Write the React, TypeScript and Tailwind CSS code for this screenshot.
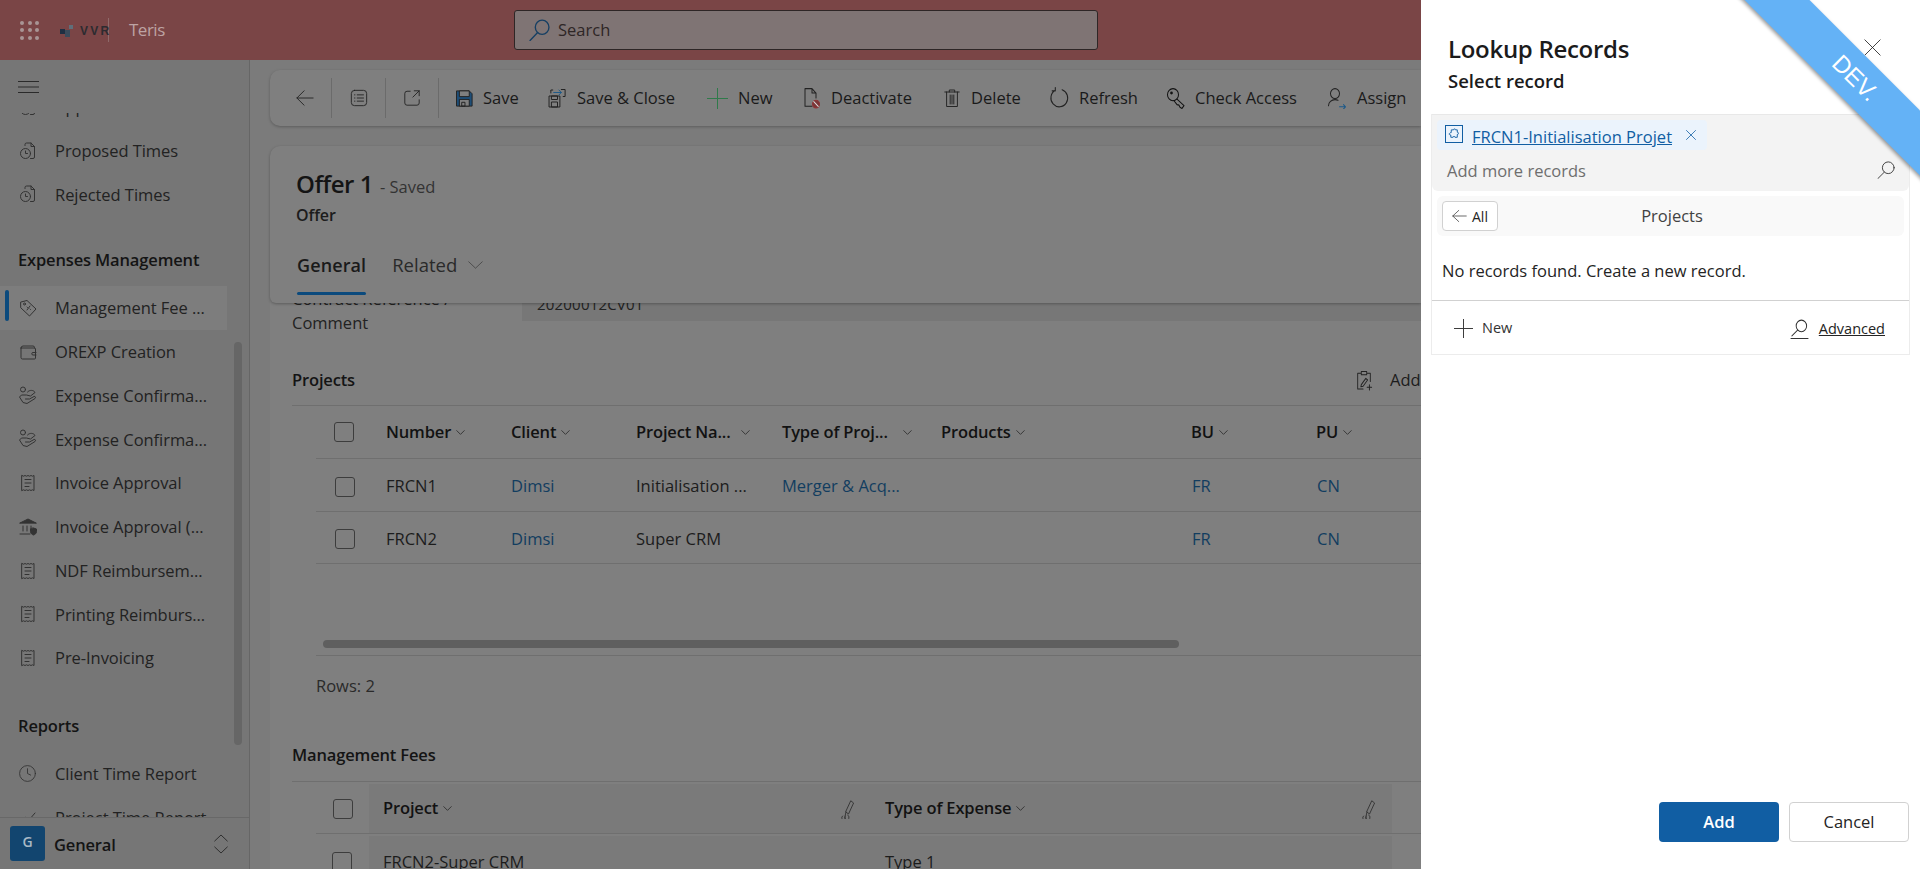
import React from "react";
import { ChevronDown, Clock } from "lucide-react";

const S = ({ children, c = "w-5 h-5", box = "0 0 20 20", stroke = "#2a2a2a", sw = 1 }: any) => (
  <svg viewBox={box} className={c + " shrink-0"} fill="none" stroke={stroke} strokeWidth={sw} strokeLinecap="round" strokeLinejoin="round" preserveAspectRatio="none">
    {children}
  </svg>
);

const Mag = ({ c = "w-[19px] h-[19px]", stroke = "#333", sw = 1 }: any) => (
  <S c={c} stroke={stroke} sw={sw}>
    <circle cx="12.5" cy="7.5" r="6.5" />
    <path d="M8 12.5 L1 19.5" />
  </S>
);
const Cross = ({ c = "w-[17px] h-[17px]", stroke = "#222", sw = 1 }: any) => (
  <S c={c} stroke={stroke} sw={sw}>
    <path d="M1 1 L19 19 M19 1 L1 19" />
  </S>
);
const PlusI = ({ c = "w-[21px] h-[21px]", stroke = "#222" }: any) => (
  <S c={c} stroke={stroke}>
    <path d="M10 0 V20 M0 10 H20" />
  </S>
);
const Arrow = ({ c = "w-[18px] h-[18px]", stroke = "#222" }: any) => (
  <S c={c} stroke={stroke}>
    <path d="M1 10 H19 M9 2 L1 10 L9 18" />
  </S>
);

const DocClock = () => (
  <S stroke="#333">
    <path d="M7 4.5 V3.5 a1.5 1.5 0 0 1 1.5-1.5 H13 l3.5 3.5 V16 a1.5 1.5 0 0 1-1.5 1.5 h-2.5" />
    <path d="M13 2 v3.5 h3.5" />
    <circle cx="7.5" cy="12.5" r="5" />
    <path d="M7.5 10 v2.5 h2" />
  </S>
);
const Tag = () => (
  <S stroke="#333">
    <path d="M3 4 l6-1.5 9 8.5 -6.5 7 -8.5-8z" />
    <circle cx="6.5" cy="6" r="1" />
    <path d="M9 12 l3-4 M9 9 l.5.5 M12 11 l.5.5" />
  </S>
);
const Wallet = () => (
  <S stroke="#333">
    <path d="M3 6 a2 2 0 0 1 2-2 h10 a1.5 1.5 0 0 1 1.5 1.5 V6" />
    <path d="M3 6 v9.5 a1.5 1.5 0 0 0 1.5 1.5 h12 a1 1 0 0 0 1-1 V7 a1 1 0 0 0-1-1 H3" />
    <path d="M18 10.5 h-3 a1 1 0 0 0 0 2.5 h3" />
  </S>
);
const Hand = () => (
  <S stroke="#333">
    <circle cx="5" cy="3.5" r="2.5" />
    <path d="M9.5 6 c2-2.5 6.5-2 7.5 .5 l-4.5 3.5 l-4 -1 h-5 l-2 2 l3.5 5.5 l4 1 l8-5 c1-1 .5-2.5-1-2 l-4.5 2.5 h-4" />
  </S>
);
const Receipt = () => (
  <S stroke="#333">
    <path d="M4 2.5 l1.5.7 1.5-.7 1.5.7 1.5-.7 1.5.7 1.5-.7 1.5.7 1.5-.7 V17.5 l-1.5-.7 -1.5.7 -1.5-.7 -1.5.7 -1.5-.7 -1.5.7 -1.5-.7 -1.5.7 Z" />
    <path d="M7 6.5 h6 M7 10 h6 M7 13.5 h4" />
  </S>
);
const Bank = () => (
  <S stroke="#333">
    <path d="M2 6 L10 2 l8 4 Z" fill="#333" />
    <path d="M5 9 v5 M9 9 v5 M13 9 v2" />
    <path d="M2 17 h10" />
    <path d="M15.5 11 l3 1 v2.5 c0 2 -1.5 3 -3 3.5 c-1.5-.5 -3-1.5 -3-3.5 V12 Z" fill="#333" />
  </S>
);
const TrendIcon = () => (
  <S stroke="#333">
    <path d="M3 14 l4-5 4 3 6-7" />
  </S>
);

const NavItem = ({ icon, label, active }: any) => (
  <div className={"relative flex items-center h-[43.75px] w-[227px] pl-[18px] " + (active ? "bg-[#7d7d7d]" : "")}>
    {active && <span className="absolute left-[5px] top-[4px] w-[4px] h-[31px] bg-[#0b4a7d] rounded-sm" />}
    <span className="w-[37px] flex shrink-0">{icon}</span>
    <span className="text-[16.5px] text-[#222] whitespace-nowrap pt-[1px] tracking-[-0.05px]">{label}</span>
  </div>
);

const Sidebar = () => (
  <aside className="w-[250px] shrink-0 bg-[#767676] border-r border-r-[#666] flex flex-col relative">
    <div className="h-[53px] shrink-0 pl-[18px] pt-[21px]">
      <svg viewBox="0 0 21 12" className="w-[21px] h-[12px]" stroke="#2a2a2a" strokeWidth="1">
        <path d="M0 .5 H21 M0 6 H21 M0 11.5 H21" />
      </svg>
    </div>
    <div className="flex-1 overflow-hidden">
      <div className="-mt-[28px]">
        <NavItem icon={<DocClock />} label="Approved Times" />
        <NavItem icon={<DocClock />} label="Proposed Times" />
        <NavItem icon={<DocClock />} label="Rejected Times" />
        <div className="pl-[18px] pt-[33px] h-[70px] text-[16.5px] font-semibold text-[#141414] tracking-[-0.15px] leading-[22px] whitespace-nowrap">Expenses Management</div>
        <NavItem active icon={<Tag />} label="Management Fee ..." />
        <NavItem icon={<Wallet />} label="OREXP Creation" />
        <NavItem icon={<Hand />} label="Expense Confirma..." />
        <NavItem icon={<Hand />} label="Expense Confirma..." />
        <NavItem icon={<Receipt />} label="Invoice Approval" />
        <NavItem icon={<Bank />} label="Invoice Approval (..." />
        <NavItem icon={<Receipt />} label="NDF Reimbursem..." />
        <NavItem icon={<Receipt />} label="Printing Reimburs..." />
        <NavItem icon={<Receipt />} label="Pre-Invoicing" />
        <div className="pl-[18px] pt-[35px] h-[72px] text-[16.5px] font-semibold text-[#141414] tracking-[-0.15px] leading-[22px]">Reports</div>
        <NavItem icon={<Clock className="w-[19px] h-[19px]" strokeWidth={1.1} color="#333" />} label="Client Time Report" />
        <NavItem icon={<TrendIcon />} label="Project Time Report" />
      </div>
    </div>
    <div className="h-[52px] shrink-0 border-t border-t-[#686868] flex items-center pl-[10px] bg-[#767676]">
      <div className="w-[35px] h-[35px] rounded-[3px] bg-[#12456f] text-[#a9b9c6] flex items-center justify-center text-[14px] font-semibold pb-[4px]">G</div>
      <span className="ml-[9px] text-[16.5px] font-semibold text-[#141414] tracking-[-0.15px] pt-[3px]">General</span>
      <span className="ml-auto mr-[21px] flex">
        <S c="w-[14px] h-[20px]" stroke="#222">
          <path d="M1 7 L10 1 L19 7 M1 13 L10 19 L19 13" />
        </S>
      </span>
    </div>
    <div className="absolute left-[234px] top-[282px] w-[8px] h-[403px] rounded bg-[#666]" />
  </aside>
);

const Cmd = ({ icon, label, w, iw }: any) => (
  <div className="flex items-center shrink-0" style={{ width: w }}>
    <span className="flex justify-start shrink-0" style={{ width: iw }}>{icon}</span>
    <span className="text-[16.5px] text-[#1a1a1a] whitespace-nowrap pt-[1px]">{label}</span>
  </div>
);

const Sep = () => <span className="w-px h-[40px] bg-[#6b6b6b] shrink-0" />;

const CommandBar = () => (
  <div className="h-[56px] ml-[20px] rounded-l-[10px] bg-[#7f7f7f] shadow-[0_1px_3px_rgba(0,0,0,0.25)] flex items-center pl-[26px] whitespace-nowrap overflow-hidden shrink-0">
    <span className="w-[35px] flex shrink-0"><Arrow /></span>
    <Sep />
    <span className="w-[53px] flex justify-center shrink-0">
      <S c="w-[18px] h-[18px]" stroke="#222">
        <rect x="1.5" y="1.5" width="17" height="17" rx="3.5" />
        <path d="M8 6.5 h7 M8 10 h7 M8 13.5 h7 M5 6.5 h.5 M5 10 h.5 M5 13.5 h.5" />
      </S>
    </span>
    <Sep />
    <span className="w-[52px] flex justify-center shrink-0">
      <S c="w-[18px] h-[18px]" stroke="#222">
        <path d="M8 2.5 H4.5 a2.5 2.5 0 0 0-2.5 2.5 v10.5 a2.5 2.5 0 0 0 2.5 2.5 h11 a2.5 2.5 0 0 0 2.5-2.5 V12" />
        <path d="M11 9 L18 2 M12.5 2 h5.5 v5.5" />
      </S>
    </span>
    <Sep />
    <div className="w-[16px] shrink-0" />
    <Cmd w={93} iw={28} label="Save" icon={
      <S c="w-[19px] h-[19px]" stroke="#222">
        <path d="M2 2 h13 l3 3 v13 H2 Z" fill="#1d4e78" />
        <rect x="5" y="2" width="10" height="6" fill="#7f7f7f" />
        <rect x="5" y="11" width="10" height="7" fill="#7f7f7f" />
        <rect x="7.5" y="14" width="3" height="4" />
      </S>
    } />
    <Cmd w={159} iw={29} label="Save & Close" icon={
      <S c="w-[19px] h-[20px]" stroke="#222">
        <path d="M1.5 8 h11 v11 h-11 Z" />
        <rect x="4" y="8" width="6" height="3.5" />
        <rect x="4" y="14" width="6" height="5" />
        <path d="M3 5 V2 h2 M14 1.5 h4 v7 h-2" />
        <path d="M6 4.5 h8 M11.5 2 l2.5 2.5 -2.5 2.5" stroke="#1d5a8a" />
      </S>
    } />
    <Cmd w={95} iw={31} label="New" icon={<PlusI stroke="#2f7a4a" />} />
    <Cmd w={141} iw={29} label="Deactivate" icon={
      <S c="w-[20px] h-[22px]" stroke="#222">
        <path d="M10 17.5 H3 V1.5 h7 l4 4 V10 M10 1.5 v4 h4" />
        <circle cx="14" cy="15.5" r="3.5" fill="#7a3638" stroke="#8f3436" />
        <path d="M11.8 13.3 l4.4 4.4" stroke="#ddd" />
      </S>
    } />
    <Cmd w={106} iw={28} label="Delete" icon={
      <S c="w-[18px] h-[20px]" stroke="#222">
        <path d="M2 4 h16 M7 4 V2 h6 v2 M4 4 v14.5 h12 V4" />
        <path d="M8 7 v9 M10 7 v9 M12 7 v9" />
      </S>
    } />
    <Cmd w={117} iw={30} label="Refresh" icon={
      <S c="w-[21px] h-[22px]" stroke="#222">
        <path d="M12.5 2.5 a8 8 0 1 1 -6.5 .5 M6 0.5 v3 h-3" />
      </S>
    } />
    <Cmd w={161} iw={29} label="Check Access" icon={
      <S c="w-[20px] h-[22px]" stroke="#111">
        <circle cx="7" cy="7" r="5.5" />
        <circle cx="5.5" cy="5.5" r=".8" fill="#111" />
        <path d="M11 11 l7 6 -2 2.5 -2-1 -1-2 -2-.5 -3-3.5" />
      </S>
    } />
    <Cmd w={94} iw={30} label="Assign" icon={
      <S c="w-[20px] h-[22px]" stroke="#222">
        <circle cx="8" cy="6" r="4.5" />
        <path d="M1.5 17 c0-3 3-5.5 6.5-5.5 c1 0 2 .2 3 .6" />
        <path d="M12.5 18 h6 M16.5 16 l2 2 -2 2" stroke="#1d5a8a" />
      </S>
    } />
  </div>
);

const FormHeader = () => (
  <div className="relative z-10 ml-[20px] mt-[20px] h-[157px] shrink-0 rounded-tl-[10px] rounded-bl-[6px] bg-[#7f7f7f] shadow-[0_1px_3px_rgba(0,0,0,0.28)] pl-[26px] pt-[21px]">
    <div className="flex items-baseline">
      <span className="text-[24px] font-semibold text-[#141414] tracking-[-0.5px] leading-[34px]">Offer 1</span>
      <span className="ml-[7px] text-[16.5px] text-[#333]">- Saved</span>
    </div>
    <div className="text-[16px] font-semibold text-[#1c1c1c] tracking-[-0.1px] leading-[22px] mt-[3px]">Offer</div>
    <div className="flex items-center mt-[26px]">
      <span className="relative font-semibold text-[18px] text-[#1a1a1a] ml-px leading-[26px] tracking-[0.1px]">
        General
        <span className="absolute left-0 right-0 top-[40px] h-[3px] rounded bg-[#0b4a7d]" />
      </span>
      <span className="ml-[26px] text-[18.5px] text-[#2a2a2a] leading-[26px]">Related</span>
      <S c="w-[15px] h-[8px] ml-[11px]" stroke="#2a2a2a">
        <path d="M1 2 L10 18 L19 2" />
      </S>
    </div>
  </div>
);

const HeadCell = ({ label, w, sort = 2 }: any) => (
  <div className="flex items-center font-semibold text-[16.5px] text-[#121212] tracking-[-0.15px] shrink-0 whitespace-nowrap" style={{ width: w }}>
    {label}
    <ChevronDown className="w-[15px] h-[15px] text-[#333]" style={{ marginLeft: sort }} strokeWidth={1.5} />
  </div>
);

const Box = () => <span className="w-[20px] h-[20px] rounded-[3px] border border-[#3d3d3d] block shrink-0" />;

const Row = ({ num, client, name, type }: any) => (
  <div className="h-[52.5px] flex items-center border-b border-b-[#6f6f6f] ml-[46px] text-[16.5px] whitespace-nowrap pt-[4px]">
    <span className="w-[70px] pl-[19px] flex shrink-0"><Box /></span>
    <span className="w-[125px] shrink-0 text-[#1c1c1c]">{num}</span>
    <span className="w-[125px] shrink-0 text-[#123d60]">{client}</span>
    <span className="w-[146px] shrink-0 text-[#1c1c1c]">{name}</span>
    <span className="w-[410px] shrink-0 text-[#123d60]">{type}</span>
    <span className="w-[125px] shrink-0 text-[#123d60]">FR</span>
    <span className="shrink-0 text-[#123d60]">CN</span>
  </div>
);

const Pen = () => (
  <S c="w-[17px] h-[20px]" stroke="#333">
    <path d="M13 2 l3 2 -6 11 -3-2 z" />
    <path d="M7 13 l-1 4" />
    <path d="M3 17 a2 2 0 1 0 3 1 M9 16 a2.5 2.5 0 1 1 -3 1" />
  </S>
);

const Main = () => (
  <main className="flex-1 min-w-0 bg-[#7b7b7b] overflow-hidden pt-[10px] flex flex-col">
    <CommandBar />
    <FormHeader />
    <div className="ml-[20px] bg-[#7f7f7f] flex-1 min-h-0 -mt-[9px] relative overflow-hidden">
      <div className="h-[74px] flex">
        <div className="w-[252px] shrink-0 pl-[22px] -mt-[7px] text-[16.5px] leading-[24px] text-[#222] whitespace-nowrap">
          <div>Contract Reference /</div>
          <div>Comment</div>
        </div>
        <div className="flex-1 h-[27px] bg-[#777] pl-[15px] text-[15px] text-[#222] tracking-[0.2px] leading-[20px]">20200012CV01</div>
      </div>
      <div className="h-[37px] pl-[22px] pb-[13px] flex items-center justify-between text-[16.5px]">
        <span className="font-semibold text-[#141414] tracking-[-0.15px]">Projects</span>
        <span className="flex items-center w-[66px] shrink-0 overflow-hidden">
          <S c="w-[18px] h-[21px]" stroke="#222">
            <path d="M7 3 H3 v15 h6 M13 3 h4 v8 M7 1.5 h6 v3 H7 Z" />
            <path d="M7 14 l5-6 2 1.5 -5 6 -2.5 .5 z" />
            <path d="M16 14 v5 M13.5 16.5 h5" />
          </S>
          <span className="ml-[17px] text-[#1c1c1c]">Add</span>
        </span>
      </div>
      <div className="border-t border-t-[#6f6f6f] ml-[22px]" />
      <div className="h-[53px] flex items-center border-b border-b-[#6f6f6f] ml-[46px]">
        <span className="w-[70px] pl-[18px] flex shrink-0"><Box /></span>
        <HeadCell label="Number" w={125} />
        <HeadCell label="Client" w={125} />
        <HeadCell label="Project Na..." w={146} sort={7} />
        <HeadCell label="Type of Proj..." w={159} sort={12} />
        <HeadCell label="Products" w={250} />
        <HeadCell label="BU" w={125} />
        <HeadCell label="PU" w={100} />
      </div>
      <Row num="FRCN1" client="Dimsi" name="Initialisation ..." type="Merger & Acq..." />
      <Row num="FRCN2" client="Dimsi" name="Super CRM" type="" />
      <div className="h-[91px] flex items-end pl-[53px] pb-[7px]">
        <div className="w-[856px] h-[8px] rounded bg-[#5f5f5f]" />
      </div>
      <div className="border-t border-t-[#6f6f6f] ml-[46px] h-[76px] pt-[16px] text-[16.5px] leading-[28px] text-[#2a2a2a]">Rows: 2</div>
      <div className="pl-[22px] h-[50px] pb-[2px] flex items-center font-semibold text-[16.5px] text-[#141414] tracking-[-0.15px]">Management Fees</div>
      <div className="border-t border-t-[#6f6f6f] ml-[22px]" />
      <div className="h-[52px] flex items-center border-b border-b-[#6f6f6f] ml-[46px] pt-[2px]">
        <span className="w-[53px] pl-[17px] flex shrink-0"><Box /></span>
        <div className="flex h-full flex-1 mr-[29px] bg-[#7a7a7a] items-center pl-[14px]">
          <div className="w-[502px] flex justify-between items-center pr-[28px] shrink-0">
            <HeadCell label="Project" w={100} />
            <Pen />
          </div>
          <div className="flex flex-1 justify-between items-center pr-[14px]">
            <HeadCell label="Type of Expense" w={180} />
            <Pen />
          </div>
        </div>
      </div>
      <div className="h-[52px] flex items-start ml-[46px] mt-[2px]">
        <span className="w-[53px] pl-[16px] pt-[16px] flex shrink-0"><Box /></span>
        <div className="flex flex-1 mr-[29px] bg-[#7a7a7a] h-full pl-[14px] pt-[15px] text-[16.5px] leading-[22px] text-[#1c1c1c]">
          <span className="w-[502px] shrink-0">FRCN2-Super CRM</span>
          <span>Type 1</span>
        </div>
      </div>
    </div>
  </main>
);

const Panel = () => (
  <aside className="w-[499px] shrink-0 h-full bg-white flex flex-col relative overflow-hidden">
    <div className="h-[114px] shrink-0 pl-[27px] pt-[31px] relative">
      <div className="text-[24px] leading-[36px] font-semibold text-[#1b1b1b] tracking-[-0.3px]">Lookup Records</div>
      <div className="text-[18.5px] leading-[26px] font-semibold text-[#1b1b1b] mt-[1px]">Select record</div>
      <span className="absolute left-[443px] top-[39px] flex"><Cross /></span>
    </div>
    <div className="ml-[10px] mr-[10px] border-x border-x-[#ececec] border-b border-b-[#ececec] h-[241px] shrink-0 relative">
      <div className="h-[77px] bg-[#f3f3f3] border-t border-t-[#e8e8e8] rounded-b-[6px] px-[5px] pt-[5px]">
        <div className="flex items-center h-[30px] w-[270px] rounded-[4px] bg-[#ebf3fc] pl-[8px] relative">
          <span className="w-[18px] h-[18px] border border-[#115ea3] flex items-center justify-center mr-[9px] -mt-[2px] shrink-0">
            <S c="w-[13px] h-[13px]" stroke="#115ea3" box="0 0 14 14">
              <path d="M4 2 h2 a1 1 0 0 1 2 0 h2 v2.5 a1 1 0 0 1 0 2.5 v3 h-2.5 a1 1 0 0 0-2 0 H3 V7.5 a1 1 0 0 1-1-2 a1 1 0 0 1 1-.5 Z" />
            </S>
          </span>
          <span className="text-[16.5px] text-[#115ea3] underline whitespace-nowrap pt-[5px]">FRCN1-Initialisation Projet</span>
          <span className="absolute left-[249px] top-[10px] flex"><Cross c="w-[10px] h-[10px]" stroke="#115ea3" sw={1.6} /></span>
        </div>
        <div className="flex items-center justify-between pl-[10px] pr-[9px] h-[41px] text-[16.5px] text-[#6e6e6e] pt-[1px]">
          <span>Add more records</span>
          <span className="-mt-[3px] flex"><Mag c="w-[18px] h-[18px]" /></span>
        </div>
      </div>
      <div className="mt-[5px] mx-[5px] h-[40px] rounded-[6px] bg-[#f9f9f9] flex items-center relative pl-[5px]">
        <span className="w-[56px] h-[30px] rounded-[4px] border border-[#d1d1d1] bg-white flex items-center pl-[9px] shrink-0">
          <Arrow c="w-[15px] h-[14px] mr-[5px]" stroke="#333" />
          <span className="text-[14px] text-[#242424]">All</span>
        </span>
        <span className="flex-1 text-center text-[16.5px] text-[#424242] pr-[62px] pl-[4px]">Projects</span>
      </div>
      <div className="h-[65px] border-b border-b-[#d1d1d1] pl-[10px] pt-[24px] text-[16.5px] leading-[22px] text-[#242424]">No records found. Create a new record.</div>
      <div className="h-[54px] flex items-center justify-between pl-[22px] pr-[24px] text-[14.5px] text-[#333]">
        <span className="flex items-center">
          <PlusI c="w-[19px] h-[19px] mr-[9px]" stroke="#333" />
          <span>New</span>
        </span>
        <span className="flex items-center">
          <S c="w-[19px] h-[21px]" stroke="#333">
            <circle cx="12" cy="7.5" r="5.5" />
            <path d="M8 11.5 L2 17 M1 19.5 h18" />
          </S>
          <span className="ml-[10px] underline text-[#242424] pt-[2px]">Advanced</span>
        </span>
      </div>
    </div>
    <div className="flex-1" />
    <div className="flex justify-end gap-[10px] pr-[11px] pb-[27px]">
      <span className="w-[120px] h-[40px] rounded-[4px] bg-[#115ea3] text-white font-semibold text-[16.5px] flex items-center justify-center">Add</span>
      <span className="w-[120px] h-[40px] rounded-[4px] border border-[#d1d1d1] bg-white text-[#242424] text-[16.5px] flex items-center justify-center">Cancel</span>
    </div>
    <div className="absolute left-[277px] top-[48px] w-[300px] h-[46px] rotate-45 bg-[#64b2f6] shadow-[0_2px_4px_rgba(0,0,0,0.4)] flex items-center justify-center text-white text-[24px] pl-[20px]" style={{ fontFamily: '"Liberation Sans", sans-serif' }}>
      DEV.
    </div>
  </aside>
);

export default function App() {
  return (
    <div className="w-[1920px] h-[869px] flex overflow-hidden" style={{ fontFamily: '"Open Sans", "Noto Sans", sans-serif' }}>
      <div className="flex-1 min-w-0 flex flex-col">
        <header className="h-[60px] shrink-0 bg-[#7a4546] flex items-center relative">
          <div className="grid grid-cols-3 gap-[3.5px] ml-[20px] w-[19px]">
            {Array.from({ length: 9 }).map((_, i) => (
              <span key={i} className="w-[4px] h-[4px] rounded-full bg-[#a89595]" />
            ))}
          </div>
          <div className="ml-[21px] flex items-center w-[49px] h-[24px] border-r border-r-[#8f6a6a] relative">
            <svg viewBox="0 0 14 12" className="w-[14px] h-[12px] shrink-0 mt-[2px]">
              <rect x="0" y="4" width="5" height="5" fill="#1f2f42" />
              <rect x="5" y="5" width="5" height="7" fill="#3a4a5a" />
              <rect x="9" y="0" width="4" height="4" fill="#5f6f7a" />
            </svg>
            <span className="ml-[6px] text-[12px] font-semibold tracking-[2.3px] text-[#2c2b30] mt-[2px]" style={{ fontFamily: '"Liberation Sans", sans-serif' }}>VVR</span>
          </div>
          <span className="ml-[20px] text-[17px] text-[#bda3a3] tracking-[-0.5px] -mt-[1px]">Teris</span>
          <div className="absolute left-[514px] top-[10px] w-[584px] h-[40px] border border-[#2e2626] rounded-[3px] bg-[#7f7474] flex items-center pl-[14px]">
            <Mag c="w-[21px] h-[22px] mr-[8px]" stroke="#163f63" sw={1.3} />
            <span className="text-[16.5px] text-[#2e2626]">Search</span>
          </div>
        </header>
        <div className="flex-1 min-h-0 flex">
          <Sidebar />
          <Main />
        </div>
      </div>
      <Panel />
    </div>
  );
}
